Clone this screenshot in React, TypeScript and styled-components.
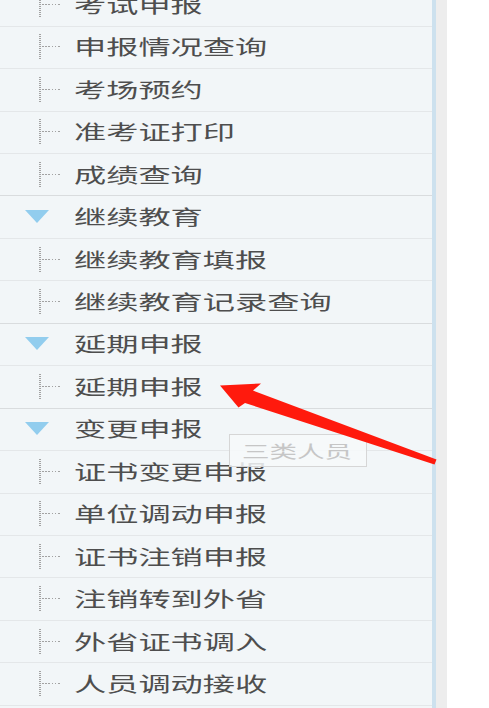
import React from "react";
import styled, { createGlobalStyle } from "styled-components";

type Item = { label: string; group?: boolean };

const items: Item[] = [
  { label: "考试申报" },
  { label: "申报情况查询" },
  { label: "考场预约" },
  { label: "准考证打印" },
  { label: "成绩查询" },
  { label: "继续教育", group: true },
  { label: "继续教育填报" },
  { label: "继续教育记录查询" },
  { label: "延期申报", group: true },
  { label: "延期申报" },
  { label: "变更申报", group: true },
  { label: "证书变更申报" },
  { label: "单位调动申报" },
  { label: "证书注销申报" },
  { label: "注销转到外省" },
  { label: "外省证书调入" },
  { label: "人员调动接收" },
  { label: "" },
];

const GlobalStyle = createGlobalStyle`
  html, body {
    margin: 0;
    padding: 0;
    background: #ffffff;
    overflow: hidden;
  }
  body {
    font-family: "Noto Sans CJK SC", "Noto Sans", sans-serif;
  }
`;

const App = () => {
  return (
    <Page>
      <GlobalStyle />
      <Sidebar>
        <List>
          {items.map((it, i) => (
            <Row key={i} group={it.group}>
              {it.group ? (
                <Caret />
              ) : (
                <Branch>
                  <BranchH />
                </Branch>
              )}
              <Label>{it.label}</Label>
            </Row>
          ))}
        </List>
      </Sidebar>
      <Track />
      <Tip>
        <TipText>三类人员</TipText>
      </Tip>
      <Arrow viewBox="0 0 489 708" width={489} height={708}>
        <polygon
          points="220,385.5 261,383.5 253,390.5 436.5,459.5 434.5,464.5 245,403 238.5,407.5"
          fill="#ff1a0d"
        />
      </Arrow>
    </Page>
  );
};

const Page = styled.div`
  position: relative;
  width: 489px;
  height: 708px;
  display: flex;
  overflow: hidden;
  background: #ffffff;
`;

const Sidebar = styled.div`
  width: 432px;
  height: 708px;
  background: #f2f6f8;
  border-right: 4px solid #cde1ee;
  overflow: hidden;
`;

const Track = styled.div`
  width: 11px;
  height: 708px;
  background: #ededed;
`;

const List = styled.div`
  margin-top: -16.74px;
`;

const Row = styled.div<{ group?: boolean }>`
  box-sizing: border-box;
  height: 42.44px;
  display: flex;
  align-items: center;
  border-top: 1px solid ${(p) => (p.group ? "#d9dcde" : "#e4e7e9")};
  background: #f2f6f8;
`;

const Caret = styled.span`
  width: 0;
  height: 0;
  margin-left: 25px;
  margin-right: 25px;
  margin-top: -2px;
  border-left: 12px solid transparent;
  border-right: 12px solid transparent;
  border-top: 13px solid #92cdee;
`;

const Branch = styled.span`
  position: relative;
  width: 2px;
  height: 26px;
  margin-left: 39px;
  margin-right: 33px;
  background: repeating-linear-gradient(
    to bottom,
    #a3a3a3 0 1px,
    transparent 1px 2px
  );
`;

const BranchH = styled.span`
  position: absolute;
  left: 3px;
  top: 12px;
  width: 19px;
  height: 1px;
  background: repeating-linear-gradient(
    to right,
    #a3a3a3 0 1.6px,
    transparent 1.6px 3.2px
  );
`;

const Label = styled.span`
  display: inline-block;
  font-size: 20px;
  line-height: 24px;
  color: #4e4e4e;
  white-space: nowrap;
  transform: scaleX(1.61);
  transform-origin: left center;
`;

const Tip = styled.div`
  position: absolute;
  left: 229px;
  top: 434px;
  width: 138px;
  height: 33px;
  box-sizing: border-box;
  border: 1.5px solid #d6d6d6;
  background: rgba(247, 249, 250, 0.85);
  padding-left: 12px;
  display: flex;
  align-items: center;
`;

const TipText = styled.span`
  display: inline-block;
  font-size: 17px;
  color: #c6c6c6;
  white-space: nowrap;
  transform: scaleX(1.62);
  transform-origin: left center;
`;

const Arrow = styled.svg`
  position: absolute;
  left: 0;
  top: 0;
  pointer-events: none;
`;

export default App;
